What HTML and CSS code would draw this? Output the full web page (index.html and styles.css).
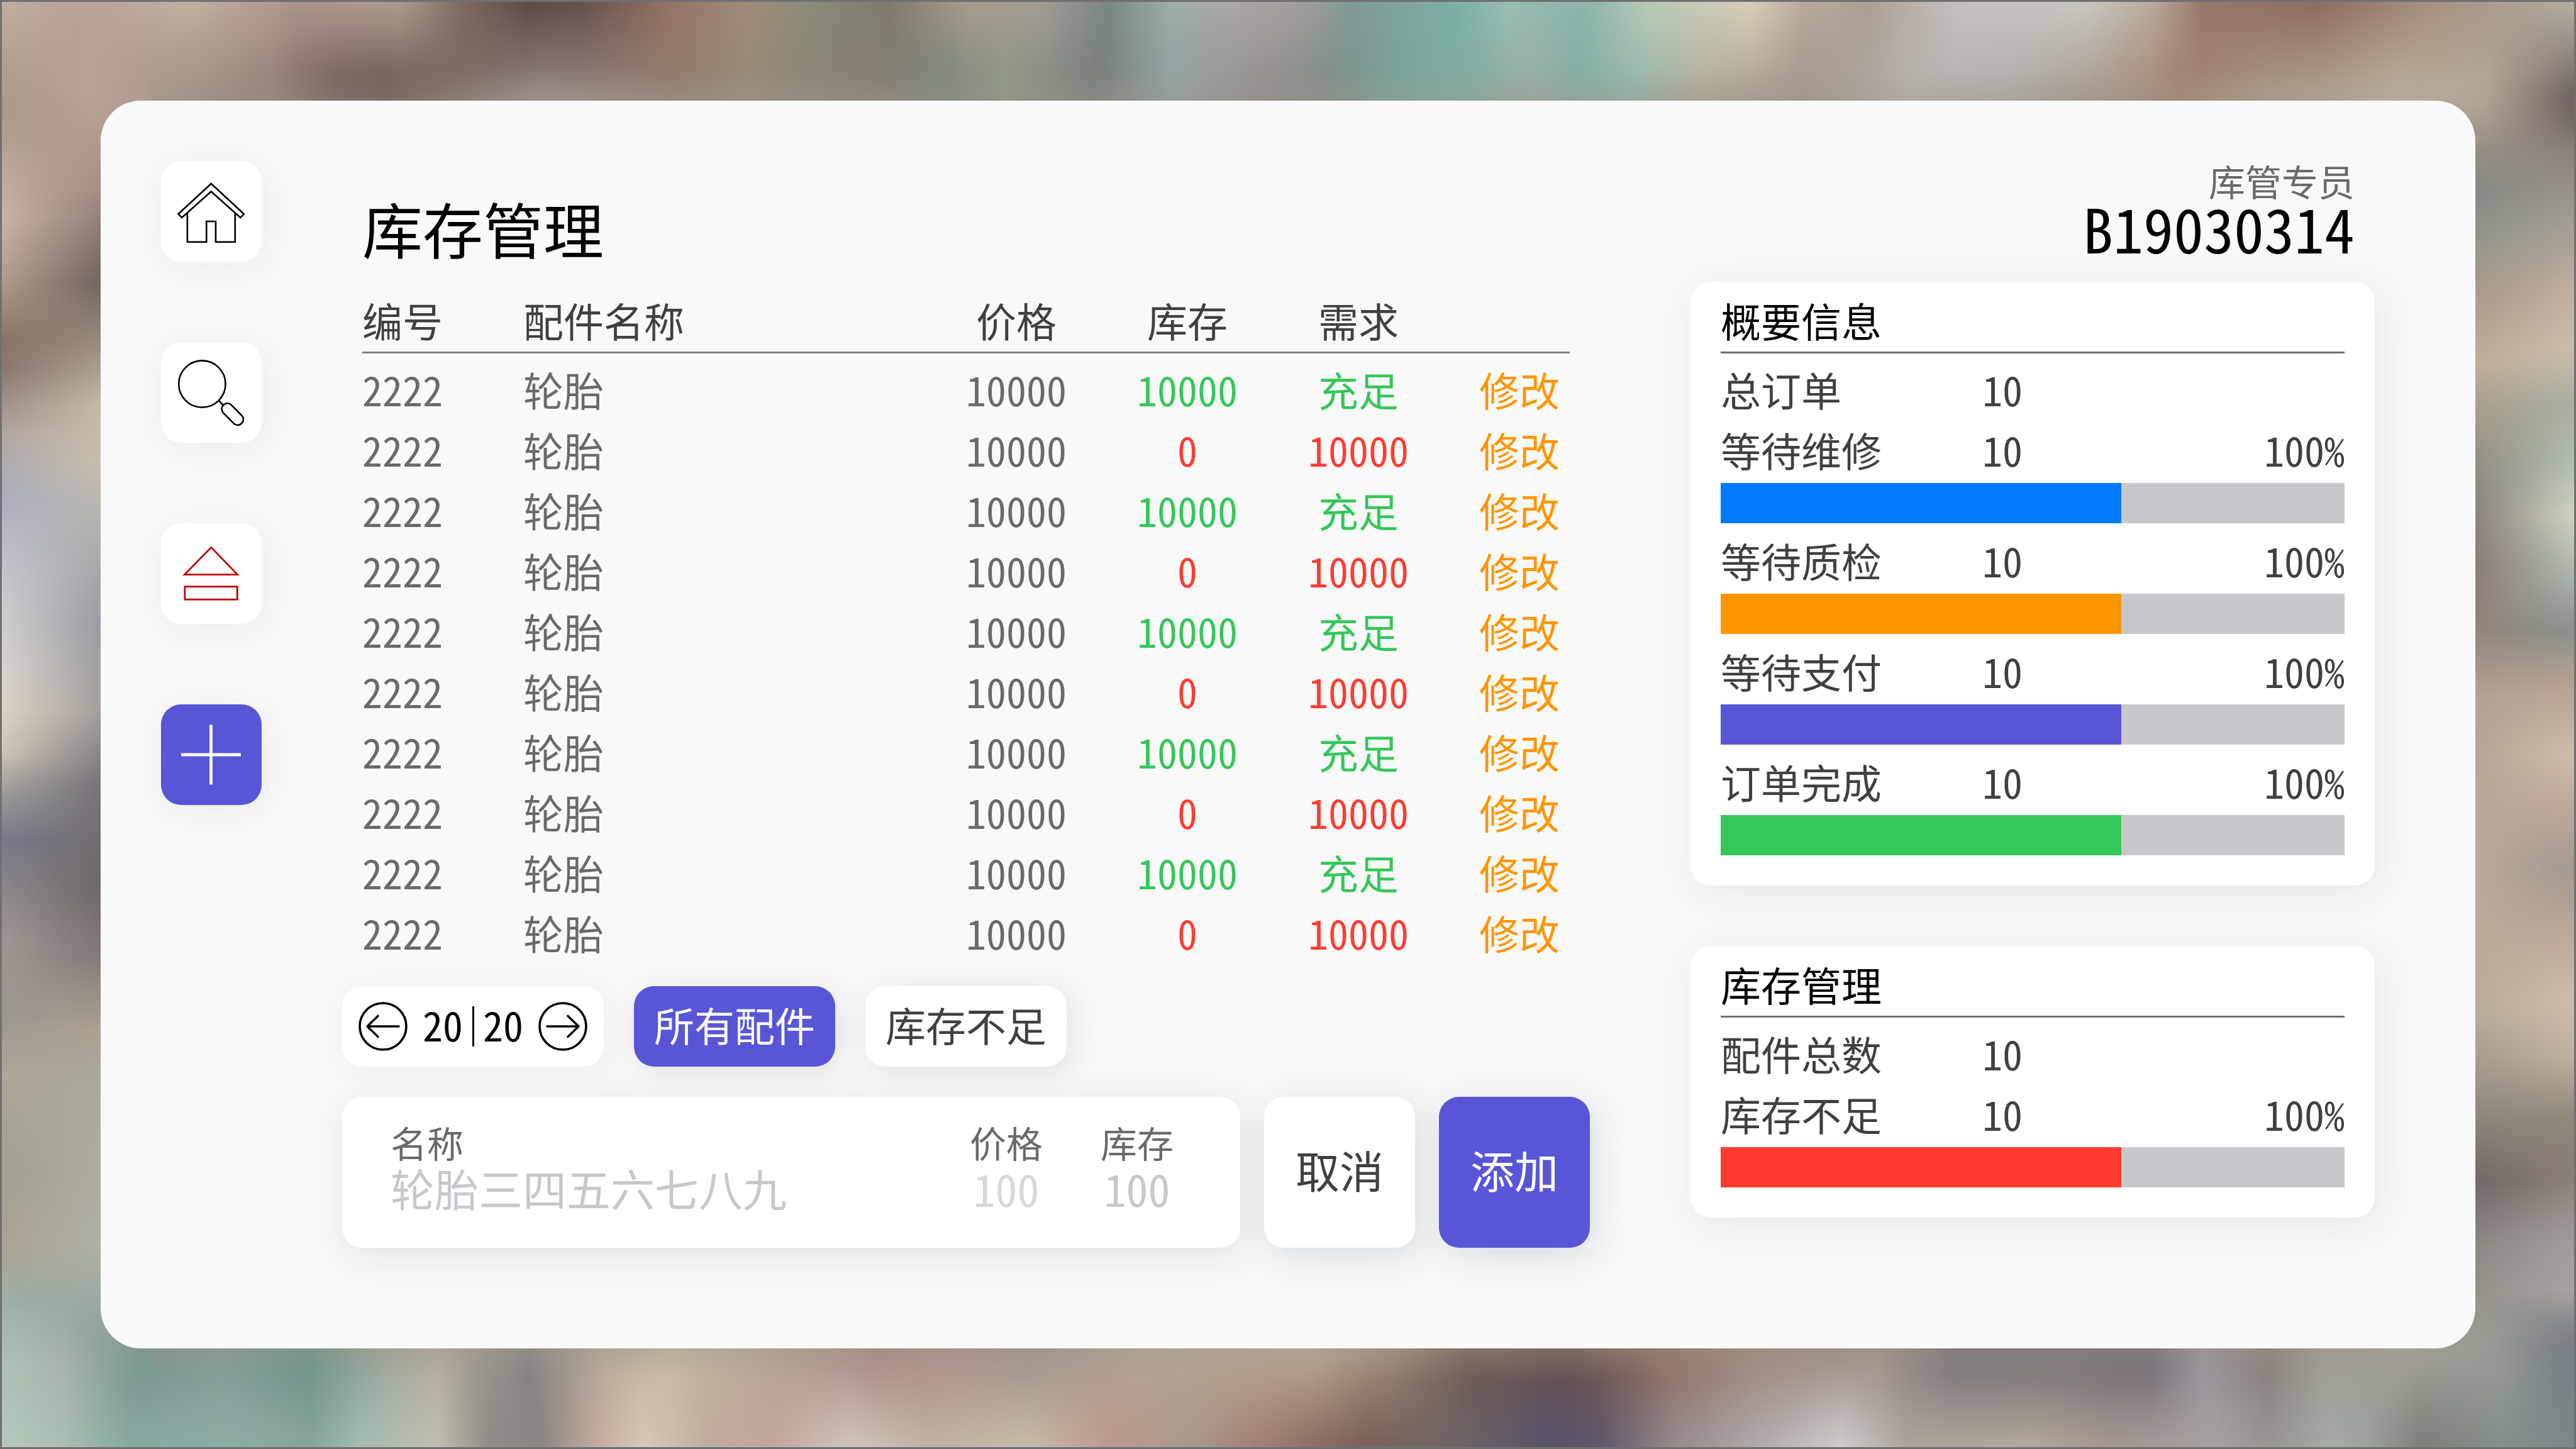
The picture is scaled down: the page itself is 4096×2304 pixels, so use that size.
FILE: index.html
```html
<!DOCTYPE html>
<html lang="zh-CN">
<head>
<meta charset="utf-8">
<meta name="viewport" content="width=device-width, initial-scale=1">
<title>库存管理</title>
<link rel="stylesheet" href="styles.css">
</head>
<body>
<div class="backdrop" aria-hidden="true">
  <span class="band band-left"></span>
  <span class="band band-right"></span>
  <span class="band band-top"></span>
  <span class="band band-bottom"></span>
</div>
<div class="page">
  <div class="panel">
    <nav class="sidebar" aria-label="导航">
      <button class="tile" type="button" aria-label="主页">
        <svg viewBox="0 0 160 160" fill="none" stroke="#000" stroke-width="2.6"><path d="M79.7 36 131.9 84.4 126.2 90 79.7 48.6 33.2 90 27.5 84.4Z"/><path d="M41.9 83V128.8H72.3V96H87V128.8H117.8V83"/></svg>
      </button>
      <button class="tile" type="button" aria-label="搜索">
        <svg viewBox="0 0 160 160" fill="none" stroke="#000" stroke-width="2.6"><circle cx="65.4" cy="66.6" r="37.2"/><path d="M92 93 99 100.5"/><rect x="93.2" y="105.6" width="41" height="18" rx="8.6" transform="rotate(45.5 113.7 114.6)"/></svg>
      </button>
      <button class="tile" type="button" aria-label="上移">
        <svg viewBox="0 0 160 160" fill="none" stroke="#c00000" stroke-width="2.8"><path d="M79.7 38.4 121.6 81.6H37.4Z"/><rect x="37.9" y="100.8" width="83.4" height="20.4"/></svg>
      </button>
      <button class="tile tile-active" type="button" aria-label="添加配件">
        <svg viewBox="0 0 160 160" fill="none" stroke="#fff" stroke-width="4.8"><path d="M32 80H127M79.5 32.5V127.5"/></svg>
      </button>
    </nav>

    <main class="main">
      <h1 class="title">库存管理</h1>
      <table class="parts">
        <colgroup><col class="col-id"><col><col class="col-num"><col class="col-num"><col class="col-num"><col class="col-action"></colgroup>
        <thead>
          <tr><th class="start" scope="col">编号</th><th class="start" scope="col">配件名称</th><th scope="col">价格</th><th scope="col">库存</th><th scope="col">需求</th><td></td></tr>
        </thead>
        <tbody>
          <tr><td class="start">2222</td><td class="start">轮胎</td><td>10000</td><td class="ok">10000</td><td class="ok">充足</td><td class="action"><button class="edit" type="button">修改</button></td></tr>
          <tr><td class="start">2222</td><td class="start">轮胎</td><td>10000</td><td class="low">0</td><td class="low">10000</td><td class="action"><button class="edit" type="button">修改</button></td></tr>
          <tr><td class="start">2222</td><td class="start">轮胎</td><td>10000</td><td class="ok">10000</td><td class="ok">充足</td><td class="action"><button class="edit" type="button">修改</button></td></tr>
          <tr><td class="start">2222</td><td class="start">轮胎</td><td>10000</td><td class="low">0</td><td class="low">10000</td><td class="action"><button class="edit" type="button">修改</button></td></tr>
          <tr><td class="start">2222</td><td class="start">轮胎</td><td>10000</td><td class="ok">10000</td><td class="ok">充足</td><td class="action"><button class="edit" type="button">修改</button></td></tr>
          <tr><td class="start">2222</td><td class="start">轮胎</td><td>10000</td><td class="low">0</td><td class="low">10000</td><td class="action"><button class="edit" type="button">修改</button></td></tr>
          <tr><td class="start">2222</td><td class="start">轮胎</td><td>10000</td><td class="ok">10000</td><td class="ok">充足</td><td class="action"><button class="edit" type="button">修改</button></td></tr>
          <tr><td class="start">2222</td><td class="start">轮胎</td><td>10000</td><td class="low">0</td><td class="low">10000</td><td class="action"><button class="edit" type="button">修改</button></td></tr>
          <tr><td class="start">2222</td><td class="start">轮胎</td><td>10000</td><td class="ok">10000</td><td class="ok">充足</td><td class="action"><button class="edit" type="button">修改</button></td></tr>
          <tr><td class="start">2222</td><td class="start">轮胎</td><td>10000</td><td class="low">0</td><td class="low">10000</td><td class="action"><button class="edit" type="button">修改</button></td></tr>
        </tbody>
      </table>

      <div class="toolbar">
        <div class="pager">
          <button class="pager-step" type="button" aria-label="上一页">
            <svg viewBox="0 0 78 78" fill="none" stroke="#000" stroke-width="3.6" stroke-linecap="round" stroke-linejoin="round"><circle cx="39" cy="39" r="37"/><path d="M64 39H14M31 22.5 14 39 31 55.5"/></svg>
          </button>
          <span class="pager-count"><span class="pager-number">20</span><span class="pager-rule"></span><span class="pager-number">20</span></span>
          <button class="pager-step" type="button" aria-label="下一页">
            <svg viewBox="0 0 78 78" fill="none" stroke="#000" stroke-width="3.6" stroke-linecap="round" stroke-linejoin="round"><circle cx="39" cy="39" r="37"/><path d="M14 39H64M47 22.5 64 39 47 55.5"/></svg>
          </button>
        </div>
        <button class="filter filter-active" type="button">所有配件</button>
        <button class="filter" type="button">库存不足</button>
      </div>

      <form class="entry">
        <div class="fields">
          <div class="field field-name"><label for="part-name">名称</label><input id="part-name" type="text" placeholder="轮胎三四五六七八九"></div>
          <div class="field field-price"><label for="part-price">价格</label><input id="part-price" type="text" placeholder="100"></div>
          <div class="field field-stock"><label for="part-stock">库存</label><input id="part-stock" type="text" placeholder="100"></div>
        </div>
        <button class="command" type="reset">取消</button>
        <button class="command command-primary" type="submit">添加</button>
      </form>
    </main>

    <aside class="side">
      <div class="user"><span class="user-role">库管专员</span><span class="user-id">B19030314</span></div>
      <section class="card">
        <h2>概要信息</h2>
        <div class="stat"><span>总订单</span><span>10</span></div>
        <div class="stat"><label for="bar-repair">等待维修</label><span>10</span><span class="percent">100%</span></div>
        <progress class="bar bar-blue" id="bar-repair" value="642" max="1000"></progress>
        <div class="stat"><label for="bar-check">等待质检</label><span>10</span><span class="percent">100%</span></div>
        <progress class="bar bar-orange" id="bar-check" value="642" max="1000"></progress>
        <div class="stat"><label for="bar-pay">等待支付</label><span>10</span><span class="percent">100%</span></div>
        <progress class="bar bar-purple" id="bar-pay" value="642" max="1000"></progress>
        <div class="stat"><label for="bar-done">订单完成</label><span>10</span><span class="percent">100%</span></div>
        <progress class="bar bar-green" id="bar-done" value="642" max="1000"></progress>
      </section>
      <section class="card">
        <h2>库存管理</h2>
        <div class="stat"><span>配件总数</span><span>10</span></div>
        <div class="stat"><label for="bar-low">库存不足</label><span>10</span><span class="percent">100%</span></div>
        <progress class="bar bar-red" id="bar-low" value="642" max="1000"></progress>
      </section>
    </aside>
  </div>
</div>
</body>
</html>
```
FILE: styles.css
```css
* { box-sizing: border-box; }

body {
  margin: 0;
  color: #404040;
  font-family: "Noto Sans CJK SC", sans-serif;
  font-size: 64px;
  line-height: 88px;
  /* Latin letters and digits take half the width of a Chinese character */
  font-feature-settings: "hwid";
}

button, input {
  margin: 0;
  padding: 0;
  border: 0;
  background: none;
  color: inherit;
  font: inherit;
  font-feature-settings: inherit;
}

svg { display: block; width: 100%; height: 100%; }

/* Out-of-focus photo around the panel */
.backdrop { position: fixed; inset: 0; overflow: hidden; background: #a39a90; }
.backdrop::after { content: ""; position: absolute; inset: 0; border: 3px solid #707070; }
.band, .band::before, .band::after { position: absolute; display: block; }
.band::before, .band::after { content: ""; inset: 0; }
.band-top, .band-bottom { left: 0; right: 0; height: 240px; }
.band-left, .band-right { top: 0; bottom: 0; width: 240px; }
.band-top { top: 0; -webkit-mask-image: linear-gradient(to bottom, #000 110px, transparent 240px); }
.band-bottom { bottom: 0; -webkit-mask-image: linear-gradient(to top, #000 110px, transparent 240px); }
.band-left { left: 0; }
.band-right { right: 0; }

.band-top::before { background: linear-gradient(to right, #bfaea0 0%, #b8a397 3%, #c0af9f 7.5%, #ab938a 11.5%, #ab998c 15.5%, #7e6a62 18%, #5f4b48 20.5%, #66524e 22.5%, #957465 26%, #a08b78 29%, #8a8b7b 31.5%, #807a70 34.5%, #a59a8c 37.5%, #a09b92 40.5%, #7a8784 43%, #9fadaa 45.5%, #aba6a6 48%, #a09c9a 50.5%, #7f9995 52.5%, #7cafa6 56.5%, #99bdb3 58.5%, #8cb5ab 61.5%, #b8c8b6 64%, #d6ccb8 68%, #b8a99c 70%, #aca096 72.5%, #c5c0bd 76%, #c6c4be 81%, #b9aa9c 83.5%, #98786a 85.5%, #8f6f61 90%, #a58e7e 94%, #ada295 98%, #b2aca0 100%); }
.band-top::after { background: linear-gradient(to right, #a8988a 0%, #baa295 3.5%, #a09084 7%, #8f7d74 10.5%, #6b5854 13%, #624f4b 15%, #75635c 17%, #9a8c88 21%, #94827a 24.5%, #8f7e70 26%, #938979 29%, #857d72 34%, #75857b 37%, #8a9583 39%, #777c78 42.5%, #90a09f 45.5%, #8e8a89 49%, #7f8a85 51.5%, #76a196 54%, #80ab9f 57%, #9aaca3 59.5%, #86aba2 61%, #90b5a9 63.5%, #b0a898 66%, #a09489 70%, #b7b2ad 74%, #aeaca8 78%, #a79a8e 81%, #a08070 84.5%, #aa9a88 88%, #beb3a2 93%, #b5aa9a 96.5%, #82746f 99%, #6b5f5e 100%); -webkit-mask-image: linear-gradient(to bottom, transparent 10px, #000 160px); }

.band-bottom::before { background: linear-gradient(to right, #b5cabb 0%, #a9bdb1 2.5%, #86a9a0 5%, #8dada5 9%, #88a49b 12%, #a3bcb0 14%, #c0bdaf 17%, #8f8b86 19%, #8b8683 21%, #c0a99d 23%, #d8c8b6 25%, #c0ac9e 27.5%, #c1a79c 30%, #d0c2b9 33%, #bfb2a2 36%, #c7b9a7 40%, #bd9b8f 43%, #aa9a8c 46%, #a07f74 49%, #7a6258 53%, #6f6565 56.5%, #58526c 60%, #5f566a 62%, #968a8a 65%, #ccc9c9 71.5%, #aca49b 74%, #b1a699 79%, #a39790 82%, #a8a1a3 86%, #979491 88%, #a6aba5 90.5%, #9aa09a 92%, #807f79 94%, #848f8c 97%, #7c8688 100%); }
.band-bottom::after { background: linear-gradient(to right, #a9beb0 0%, #a9b1a7 2.5%, #739089 5.5%, #7f9892 8.5%, #649085 12%, #9fa79b 15%, #b2aa9c 17%, #838280 20.5%, #b8aa9a 23.5%, #c6b8a3 26%, #b5a597 30%, #a5857f 34%, #ac8e88 37%, #9c9088 40%, #b3a596 44%, #bba896 51%, #9c8878 54%, #705b52 57%, #68504a 61%, #8c6b5e 64.5%, #9a8478 68%, #9c8d85 73%, #716b72 76%, #716b70 80%, #6b6570 83.5%, #95909a 85.5%, #857b76 88%, #9b998f 90%, #a3a298 93%, #979b94 97%, #7c848a 99%, #767f86 100%); -webkit-mask-image: linear-gradient(to top, transparent 10px, #000 160px); }

.band-left::before { background: linear-gradient(to bottom, #c4b3a3 0%, #ab9a8c 7.5%, #c8b5a5 15%, #b39f90 19%, #887468 23.5%, #8a7870 25.5%, #b3a8a2 30%, #aab0c0 34.5%, #c5c7cd 40%, #d8d4cd 46%, #ddd3c5 49%, #cfc4b5 52%, #a09e9c 54.5%, #777a8a 58%, #8a868c 61%, #a29591 65%, #9b9690 70%, #b0a69a 74%, #a3a194 81%, #ada495 86%, #9db0a5 90%, #acbcb0 93%, #d0d8ce 96.5%, #9ebbb0 100%); }
.band-left::after { background: linear-gradient(to bottom, #b9a399 0%, #bca89c 5%, #b39c90 9%, #a38e84 13%, #887670 16.5%, #726460 19.5%, #938579 23%, #c4b8a6 28%, #c6bcac 32%, #b3b2ae 36%, #9a9ba3 43%, #a59f9b 49%, #77747a 54%, #6f6868 61%, #807a77 66%, #aca091 71%, #a9aa9c 75%, #afaca1 82%, #adb0a6 86%, #93a59c 92%, #8caba2 100%); -webkit-mask-image: linear-gradient(to right, transparent 3px, #000 160px); }

.band-right::before { background: linear-gradient(to bottom, #b4aaa0 0%, #70625f 6%, #8f8680 11%, #a19b92 15%, #c1b0a2 20%, #cbbcac 24%, #a8b0a2 28%, #b0bfb0 32%, #d0d3c2 35.5%, #a8b4aa 40%, #89928c 43.5%, #b5a193 47%, #cfbcac 52%, #bca89c 56%, #a39890 60%, #bfab9d 65%, #cfbcad 69%, #bfb1a1 73%, #92897c 77%, #8b7e78 81%, #a09a96 85%, #a9a3a2 89%, #7a7e84 93%, #7d8989 97%, #788685 100%); }
.band-right::after { background: linear-gradient(to bottom, #b0978b 0%, #b5ab9c 4.5%, #9e9287 9%, #868983 13%, #8f9389 16%, #a8998a 20%, #bfad9b 25%, #9c9586 30%, #8b8680 34%, #8a7d77 39%, #93837a 43.5%, #b2a394 48%, #baa999 58%, #b8ab9a 70%, #958d82 76%, #716865 81.5%, #8e8883 86%, #99998f 92%, #95988f 96%, #84918e 100%); -webkit-mask-image: linear-gradient(to left, transparent 3px, #000 160px); }

.page { position: relative; display: flex; min-height: 100vh; padding: 160px; }
.panel {
  flex: 1;
  display: grid;
  grid-template-columns: 160px 128px 31fr 160px 17fr;
  padding: 96px 160px 96px 96px;
  border-radius: 64px;
  background: #f9f9f9;
}
.sidebar { grid-column: 1; display: flex; flex-direction: column; gap: 128px; }
.main { grid-column: 3; min-width: 0; }
.side { grid-column: 5; min-width: 0; }

.tile {
  width: 160px;
  height: 160px;
  border-radius: 32px;
  background: #fff;
  box-shadow: 6px 8px 52px rgba(0, 0, 0, .06);
}
.tile-active { background: #5856d6; }

.title {
  margin: 0 0 44px;
  padding: 48px 32px 0;
  color: #000;
  font-size: 96px;
  font-weight: 400;
  line-height: 116px;
}

.parts { width: calc(100% - 64px); margin: 0 32px; table-layout: fixed; border-spacing: 0; }
.parts th, .parts td { height: 96px; padding: 0 0 12px; text-align: center; font-weight: 400; line-height: 84px; }
.parts thead th, .parts thead td { height: 98px; padding-bottom: 8px; border-bottom: 3px solid #808080; }
.parts .start { text-align: left; }
.parts tbody { color: #6a6a6a; }
.parts tbody::before { content: ""; display: block; height: 14px; }
.parts .action { padding-left: 40px; }
.col-id { width: 256px; }
.col-num { width: 272px; }
.col-action { width: 200px; }
.parts .ok { color: #34c759; }
.parts .low { color: #ff3b30; }
.edit { display: block; width: 100%; color: #ff9500; }

.toolbar { display: flex; gap: 48px; margin: 32px 0 48px; }
.pager, .filter { height: 128px; border-radius: 32px; background: #fff; }
.pager {
  display: flex;
  align-items: center;
  justify-content: center;
  gap: 24px;
  width: 416px;
  color: #000;
  box-shadow: 6px 8px 52px rgba(0, 0, 0, .05);
}
.pager-step { width: 78px; height: 78px; }
.pager-count { display: flex; align-items: center; justify-content: space-between; width: 160px; }
.pager-number { padding-bottom: 8px; }
.pager-rule { width: 3px; height: 64px; background: #000; }
.filter { width: 320px; padding-bottom: 8px; box-shadow: 8px 10px 52px rgba(0, 0, 0, .1); }
.filter-active { background: #5856d6; color: #fff; }

.entry { display: flex; gap: 38px; }
.fields, .command { height: 240px; border-radius: 32px; background: #fff; }
.fields {
  flex: 1;
  display: flex;
  min-width: 0;
  padding: 36px 60px 0 77px;
  box-shadow: 8px 12px 60px rgba(0, 30, 50, .1);
}
.field { display: flex; flex-direction: column; width: 208px; text-align: center; }
.field label { color: #6a6a6a; font-size: 58px; line-height: 72px; }
.field input { width: 100%; height: 74px; outline: 0; font-size: 70px; line-height: 74px; text-align: inherit; }
.field input::placeholder { color: #c7c7cc; opacity: 1; }
.field-name { flex: 1; text-align: left; }
.field-price input::placeholder { color: #d8d8d8; }
.command { width: 240px; padding-bottom: 8px; font-size: 70px; box-shadow: 8px 12px 60px rgba(0, 40, 70, .14); }
.command-primary { background: #5856d6; color: #fff; }

.user { display: flex; flex-direction: column; align-items: flex-end; padding: 0 32px 42px 0; }
.user-role { color: #6a6a6a; font-size: 58px; line-height: 62px; }
.user-id { color: #000; font-size: 96px; line-height: 88px; }

.card {
  padding: 16px 48px 48px;
  border-radius: 32px;
  background: #fff;
  box-shadow: 8px 12px 64px rgba(0, 0, 0, .08);
}
.card + .card { margin-top: 96px; }
.card h2 {
  height: 98px;
  margin: 0 0 14px;
  border-bottom: 3px solid #707070;
  color: #000;
  font-size: 64px;
  font-weight: 400;
  line-height: 88px;
}
.stat { display: grid; grid-template-columns: 416px 1fr auto; height: 96px; line-height: 84px; }
.bar {
  display: block;
  width: 100%;
  height: 64px;
  border: 0;
  appearance: none;
  -webkit-appearance: none;
  background: #c7c7cc;
}
.bar + .stat { margin-top: 16px; }
.bar::-webkit-progress-bar { background: #c7c7cc; }
.bar::-webkit-progress-value { background: var(--fill); }
.bar-blue { --fill: #007aff; }
.bar-orange { --fill: #ff9500; }
.bar-purple { --fill: #5856d6; }
.bar-green { --fill: #34c759; }
.bar-red { --fill: #ff3b30; }
```
